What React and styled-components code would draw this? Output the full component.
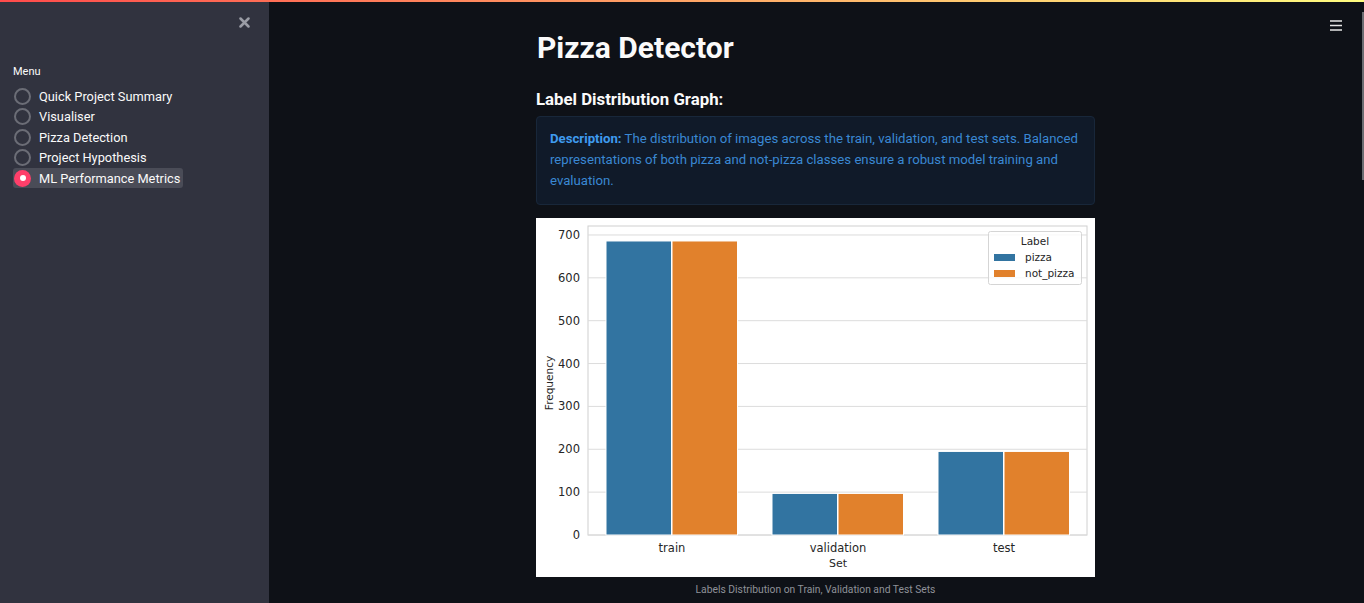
import React from "react";
import styled, { createGlobalStyle } from "styled-components";

const Global = createGlobalStyle`
  html, body { margin: 0; padding: 0; background: #0e1117; }
  body { font-family: Roboto, "Noto Sans", sans-serif; overflow: hidden; }
  * { box-sizing: border-box; }
`;

const Page = styled.div`
  position: relative;
  display: flex;
  width: 1364px;
  height: 603px;
  background: #0e1117;
  overflow: hidden;
`;

const TopBar = styled.div`
  position: absolute;
  left: 0; top: 0; right: 0;
  height: 2px;
  background: linear-gradient(90deg, #ff4b4b, #fffd80);
  z-index: 5;
`;

const Sidebar = styled.aside`
  width: 269px;
  flex: 0 0 269px;
  height: 100%;
  background: #31333f;
  padding: 12px 13px 0 13px;
  display: flex;
  flex-direction: column;
`;

const CloseRow = styled.div`
  display: flex;
  justify-content: flex-end;
  padding-right: 6px;
  height: 20px;
  margin-bottom: 33px;
  align-items: center;
`;

const MenuLabel = styled.div`
  font-size: 11px;
  color: #fafafa;
  margin-bottom: 8px;
`;

const RadioList = styled.div`
  display: flex;
  flex-direction: column;
  gap: 0.6px;
`;

const RadioItem = styled.div`
  display: flex;
  align-items: center;
  gap: 8px;
  height: 20px;
  padding: 0 3px 0 0;
  align-self: flex-start;
  border-radius: 3px;
  background: ${(p) => (p.$active ? "#4a4c57" : "transparent")};
  color: #fafafa;
  font-size: 12.8px;
`;

const Circle = styled.span`
  width: 17px;
  height: 17px;
  border-radius: 50%;
  margin-left: 1px;
  display: flex;
  align-items: center;
  justify-content: center;
  border: ${(p) => (p.$active ? "none" : "2px solid #6b6d76")};
  background: ${(p) => (p.$active ? "#ff3f6a" : "transparent")};
  &::after {
    content: "";
    display: ${(p) => (p.$active ? "block" : "none")};
    width: 6px;
    height: 6px;
    border-radius: 50%;
    background: #fff;
  }
`;

const Main = styled.main`
  position: relative;
  flex: 1;
  height: 100%;
  display: flex;
  justify-content: center;
  padding-right: 2px;
`;

const Menu = styled.div`
  position: absolute;
  right: 22px;
  top: 16px;
`;

const Scrollbar = styled.div`
  position: absolute;
  right: 0;
  top: 12px;
  width: 2px;
  height: 168px;
  background: #6b6d72;
`;

const Content = styled.div`
  width: 559px;
  display: flex;
  flex-direction: column;
  padding-top: 28px;
`;

const Title = styled.h1`
  margin: 0 0 0 1px;
  font-size: 30px;
  font-weight: 700;
  color: #fafafa;
  line-height: 40px;
`;

const SubTitle = styled.h3`
  margin: 19px 0 0 0;
  font-size: 16.8px;
  font-weight: 700;
  color: #fafafa;
  line-height: 24px;
`;

const InfoBox = styled.div`
  margin-top: 5px;
  background: #101a29;
  border: 1px solid #18273a;
  border-radius: 4px;
  padding: 11px 14px 13px 13px;
  color: #3a88d3;
  font-size: 13.2px;
  line-height: 21px;
  b { color: #3f9bef; font-weight: 700; }
`;

const Figure = styled.div`
  margin-top: 13px;
  width: 559px;
  height: 359px;
  background: #ffffff;
`;

const Caption = styled.div`
  margin-top: 6px;
  text-align: center;
  font-size: 10.3px;
  color: #8f9199;
`;

const items = [
  "Quick Project Summary",
  "Visualiser",
  "Pizza Detection",
  "Project Hypothesis",
  "ML Performance Metrics",
];

function Chart() {
  const L = 52, R = 551, T = 8, B = 317;
  const yFor = (v) => B - v * 0.4286;
  const ticks = [0, 100, 200, 300, 400, 500, 600, 700];
  const bars = [
    { x: 70, v: 686, c: "#3274a1" },
    { x: 136, v: 686, c: "#e1812c" },
    { x: 236, v: 97, c: "#3274a1" },
    { x: 302, v: 97, c: "#e1812c" },
    { x: 402, v: 195, c: "#3274a1" },
    { x: 468, v: 195, c: "#e1812c" },
  ];
  const font = "DejaVu Sans, sans-serif";
  return (
    <svg width="559" height="359" viewBox="0 0 559 359">
      <rect x={L} y={T} width={R - L} height={B - T} fill="#fff" stroke="#d0d0d0" strokeWidth="1" />
      {ticks.map((t) => (
        <g key={t}>
          <line x1={L} x2={R} y1={yFor(t)} y2={yFor(t)} stroke="#dcdcdc" strokeWidth="1" />
          <text x={L - 8} y={yFor(t) + 4} textAnchor="end" fontSize="11.5" fill="#262626" fontFamily={font}>{t}</text>
        </g>
      ))}
      {bars.map((b, i) => (
        <rect key={i} x={b.x} y={yFor(b.v)} width={65.5} height={B - yFor(b.v)} fill={b.c} stroke="#fff" strokeWidth="1" />
      ))}
      <text x="0" y="0" transform="translate(16.5 165) rotate(-90)" textAnchor="middle" fontSize="10.5" fill="#262626" fontFamily={font}>Frequency</text>
      {[["train", 136], ["validation", 302], ["test", 468]].map(([l, x]) => (
        <text key={l} x={x} y={334} textAnchor="middle" fontSize="11.5" fill="#262626" fontFamily={font}>{l}</text>
      ))}
      <text x={302} y={349} textAnchor="middle" fontSize="11" fill="#262626" fontFamily={font}>Set</text>
      <rect x="452.5" y="13.5" width="93" height="53" rx="2" fill="#fff" fillOpacity="0.8" stroke="#d5d5d5" />
      <text x="499" y="27" textAnchor="middle" fontSize="10.5" fill="#262626" fontFamily={font}>Label</text>
      <rect x="458" y="36" width="21" height="7" fill="#3274a1" />
      <text x="489" y="43" fontSize="10.5" fill="#262626" fontFamily={font}>pizza</text>
      <rect x="458" y="52" width="21" height="7" fill="#e1812c" />
      <text x="489" y="59" fontSize="10.5" fill="#262626" fontFamily={font}>not_pizza</text>
    </svg>
  );
}

export default function App() {
  return (
    <>
      <Global />
      <Page>
        <TopBar />
        <Sidebar>
          <CloseRow>
            <svg width="11" height="11" viewBox="0 0 11 11">
              <path d="M1.5 1.5 L9.5 9.5 M9.5 1.5 L1.5 9.5" stroke="#9a9ca5" strokeWidth="2.5" strokeLinecap="round" />
            </svg>
          </CloseRow>
          <MenuLabel>Menu</MenuLabel>
          <RadioList>
            {items.map((it, i) => {
              const active = i === items.length - 1;
              return (
                <RadioItem key={it} $active={active}>
                  <Circle $active={active} />
                  {it}
                </RadioItem>
              );
            })}
          </RadioList>
        </Sidebar>
        <Main>
          <Menu>
            <svg width="12" height="11" viewBox="0 0 12 11">
              <path d="M0 1 H12 M0 5.5 H12 M0 10 H12" stroke="#e6e6e6" strokeWidth="1.4" />
            </svg>
          </Menu>
          <Scrollbar />
          <Content>
            <Title>Pizza Detector</Title>
            <SubTitle>Label Distribution Graph:</SubTitle>
            <InfoBox>
              <b>Description:</b> The distribution of images across the train, validation, and test sets. Balanced representations of both pizza and not-pizza classes ensure a robust model training and evaluation.
            </InfoBox>
            <Figure>
              <Chart />
            </Figure>
            <Caption>Labels Distribution on Train, Validation and Test Sets</Caption>
          </Content>
        </Main>
      </Page>
    </>
  );
}
